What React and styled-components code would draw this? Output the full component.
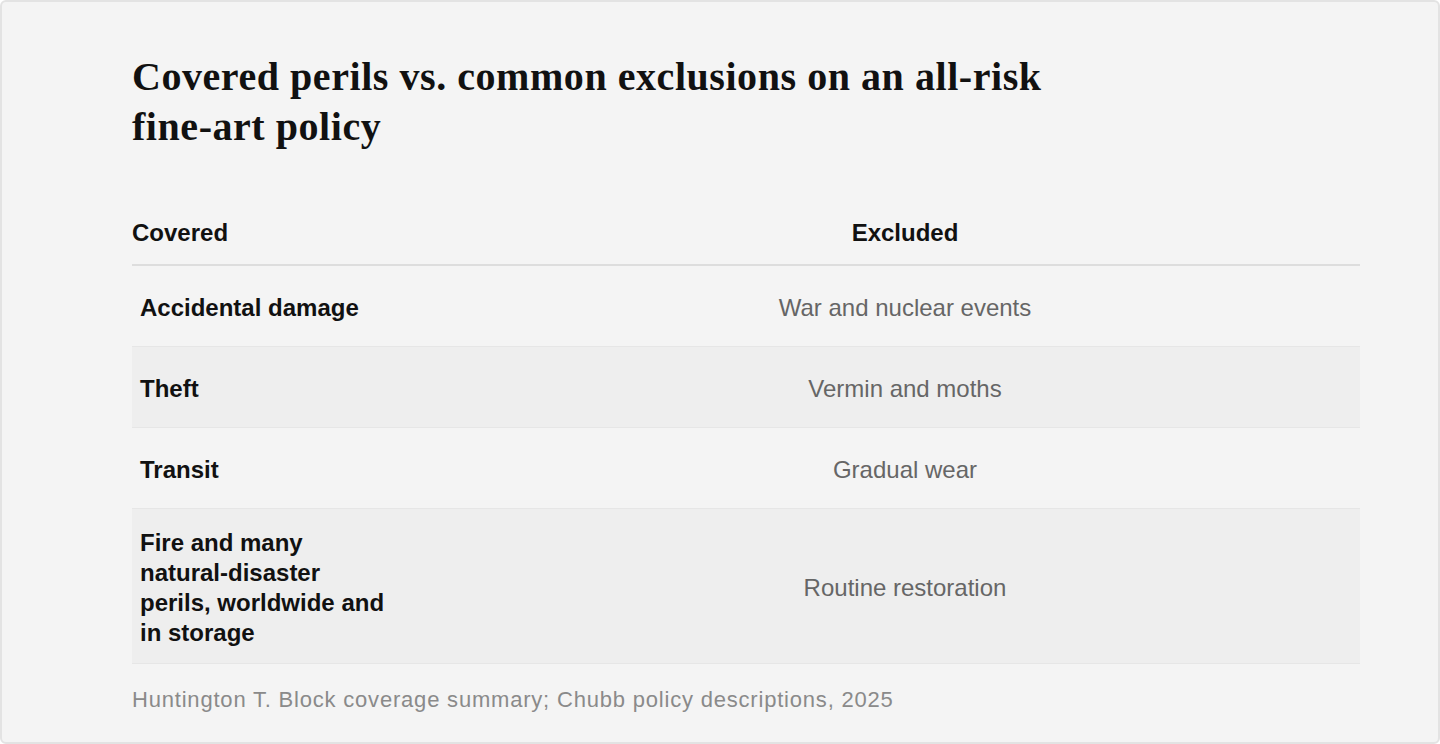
import React from 'react';
import styled, { createGlobalStyle } from 'styled-components';

const GlobalStyle = createGlobalStyle`
  html, body {
    margin: 0;
    padding: 0;
    background: #ffffff;
  }
  * {
    box-sizing: border-box;
  }
`;

const Card = styled.div`
  min-height: 744px;
  background: #f4f4f4;
  border: 2px solid #e3e3e3;
  border-radius: 6px;
  padding: 50px 78px 24px 130px;
  font-family: "Liberation Sans", Arial, sans-serif;
`;

const Title = styled.h1`
  margin: 0;
  max-width: 935px;
  font-family: "Liberation Serif", "Times New Roman", serif;
  font-weight: 700;
  font-size: 40px;
  line-height: 50px;
  letter-spacing: 0.55px;
  color: #111111;
`;

const Table = styled.div`
  margin-top: 50px;
  display: flex;
  flex-direction: column;
`;

const Row = styled.div`
  display: grid;
  grid-template-columns: 318px 1fr;
  align-items: center;
  min-height: ${(p) => (p.$head ? '63px' : '81px')};
  background: ${(p) => (p.$shaded ? '#eeeeee' : 'transparent')};
  border-bottom: ${(p) => (p.$head ? '2px solid #dddddd' : '1px solid #e6e6e6')};
`;

const HeadCell = styled.div`
  font-weight: 700;
  font-size: 24px;
  line-height: 30px;
  color: #111111;
  text-align: ${(p) => (p.$center ? 'center' : 'left')};
  padding: 16px 0;
`;

const PerilCell = styled.div`
  padding: 19px 8px 15px;
  font-weight: 700;
  font-size: 24px;
  line-height: 30px;
  color: #111111;
`;

const PerilText = styled.span`
  display: block;
  max-width: 256px;
`;

const ExclusionCell = styled.div`
  padding: 19px 8px 15px;
  text-align: center;
  font-size: 24px;
  line-height: 30px;
  color: #666666;
`;

const Source = styled.p`
  margin: 21px 0 0;
  font-size: 22px;
  line-height: 30px;
  letter-spacing: 0.8px;
  color: #8a8a8a;
`;

const rows = [
  { covered: 'Accidental damage', excluded: 'War and nuclear events' },
  { covered: 'Theft', excluded: 'Vermin and moths' },
  { covered: 'Transit', excluded: 'Gradual wear' },
  {
    covered: 'Fire and many natural-disaster perils, worldwide and in storage',
    excluded: 'Routine restoration',
  },
];

export default function App() {
  return (
    <>
      <GlobalStyle />
      <Card>
        <Title>Covered perils vs. common exclusions on an all-risk fine-art policy</Title>
        <Table>
          <Row $head>
            <HeadCell>Covered</HeadCell>
            <HeadCell $center>Excluded</HeadCell>
          </Row>
          {rows.map((row, i) => (
            <Row key={row.covered} $shaded={i % 2 === 1}>
              <PerilCell>
                <PerilText>{row.covered}</PerilText>
              </PerilCell>
              <ExclusionCell>{row.excluded}</ExclusionCell>
            </Row>
          ))}
        </Table>
        <Source>Huntington T. Block coverage summary; Chubb policy descriptions, 2025</Source>
      </Card>
    </>
  );
}
